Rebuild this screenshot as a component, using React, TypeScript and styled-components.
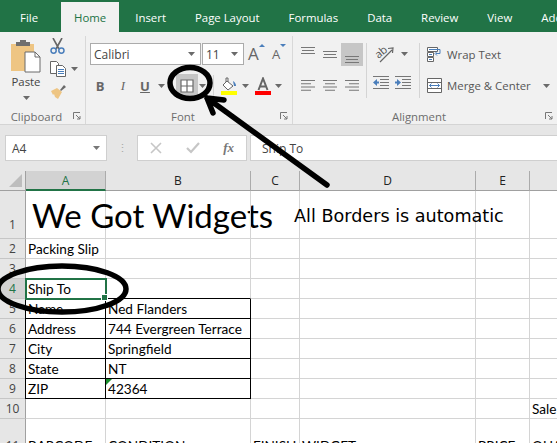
import React, { FunctionComponent } from 'react';
import styled, { createGlobalStyle } from 'styled-components';

const UI_FONT = `"Open Sans", "Noto Sans", sans-serif`;
const CELL_FONT = `Lato, "Noto Sans", sans-serif`;
const GREEN = '#217346';
const BLUE = '#4a7ebb';

const TABS = ['File', 'Home', 'Insert', 'Page Layout', 'Formulas', 'Data', 'Review', 'View', 'Add-ins'];
const COLUMNS = ['A', 'B', 'C', 'D', 'E', 'F'];

type CellData = { text?: string; boxed?: boolean; selected?: boolean; flag?: boolean };
type RowData = { label: string; height: number; cells: Record<string, CellData> };

const ROWS: RowData[] = [
  { label: '1', height: 48, cells: { A: { text: 'We Got Widgets' } } },
  { label: '2', height: 20, cells: { A: { text: 'Packing Slip' } } },
  { label: '3', height: 20, cells: {} },
  { label: '4', height: 20, cells: { A: { text: 'Ship To', selected: true } } },
  { label: '5', height: 20, cells: { A: { text: 'Name', boxed: true }, B: { text: 'Ned Flanders', boxed: true } } },
  { label: '6', height: 20, cells: { A: { text: 'Address', boxed: true }, B: { text: '744 Evergreen Terrace', boxed: true } } },
  { label: '7', height: 20, cells: { A: { text: 'City', boxed: true }, B: { text: 'Springfield', boxed: true } } },
  { label: '8', height: 20, cells: { A: { text: 'State', boxed: true }, B: { text: 'NT', boxed: true } } },
  { label: '9', height: 20, cells: { A: { text: 'ZIP', boxed: true }, B: { text: '42364', boxed: true, flag: true } } },
  { label: '10', height: 20, cells: { F: { text: 'Sale' } } },
  {
    label: '11',
    height: 37,
    cells: {
      A: { text: 'BARCODE' },
      B: { text: 'CONDITION' },
      C: { text: 'FINISH' },
      D: { text: 'WIDGET' },
      E: { text: 'PRICE' },
      F: { text: 'QUANTITY' },
    },
  },
];

const Caret: FunctionComponent<{ color?: string }> = ({ color = '#6a6a6a' }) => (
  <svg width="7" height="4" viewBox="0 0 7 4">
    <path d="M0 0h7L3.500 4z" fill={color} />
  </svg>
);

const PasteIcon = () => (
  <svg width="32" height="34" viewBox="0 0 32 34">
    <path d="M1 5h23v27H1z" fill="#eec583" />
    <path d="M6 3h4V1h6v2h4v4H6z" fill="#6f6f6f" />
    <path d="M15 13h10l5 5v15H15z" fill="#fff" stroke="#6a6a6a" />
    <path d="M25 13v5h5" fill="none" stroke="#6a6a6a" />
  </svg>
);

const ScissorsIcon = () => (
  <svg width="15" height="16" viewBox="0 0 15 16">
    <path d="M3 0l6 11M12 0L6 11" stroke="#666" strokeWidth="1.6" fill="none" />
    <circle cx="3.600" cy="12.600" r="2.600" fill="none" stroke={BLUE} strokeWidth="1.500" />
    <circle cx="11.400" cy="12.600" r="2.600" fill="none" stroke={BLUE} strokeWidth="1.500" />
  </svg>
);

const CopyIcon = () => (
  <svg width="16" height="16" viewBox="0 0 16 16">
    <path d="M.5.5h6l2 2v10h-8z" fill="#fff" stroke="#666" />
    <path d="M6.500 4.500h6l3 3v8h-9z" fill="#fff" stroke="#666" />
    <path d="M8 8.500h6M8 10.500h6M8 12.500h6" stroke={BLUE} />
  </svg>
);

const BrushIcon = () => (
  <svg width="17" height="15" viewBox="0 0 17 15">
    <path d="M10 6l4-5 2 2-5 4z" fill="#6a6a6a" />
    <path d="M1 7l6-3 5 4-4 7-3-2-1-3-1 1z" fill="#eec583" />
  </svg>
);

const BordersIcon = () => (
  <svg width="14" height="14" viewBox="0 0 14 14">
    <path d="M1 1h12v12H1zM7 1v12M1 7h12" fill="#fff" stroke="#6a6a6a" strokeWidth="1.200" />
  </svg>
);

const FillIcon = () => (
  <svg width="17" height="18" viewBox="0 0 17 18">
    <path d="M6 4l6 5-5 4-5-5z" fill="#fff" stroke="#666" />
    <path d="M5 5V1h2v4" fill="none" stroke="#666" />
    <path d="M12 4c2 1 3 3 3 5h-2z" fill={BLUE} />
    <path d="M0 14h16v4H0z" fill="#ffff00" />
  </svg>
);

const FontColorIcon = () => (
  <svg width="17" height="18" viewBox="0 0 17 18">
    <path d="M3.500 13L8 1.500 12.500 13M5 9.500h6" fill="none" stroke="#666" strokeWidth="2" />
    <path d="M0 14h16v4H0z" fill="#ff0000" />
  </svg>
);

const VerticalAlign: FunctionComponent<{ top: number }> = ({ top }) => (
  <svg width="14" height="16" viewBox="0 0 14 16">
    <path d={`M0 ${top + 0.5}h14M1 ${top + 3.5}h12M0 ${top + 6.5}h14`} stroke="#777" />
  </svg>
);

const HorizontalAlign: FunctionComponent<{ side: 'left' | 'center' | 'right' }> = ({ side }) => {
  const lines = [14, 10, 14, 10];
  const start = (w: number) => (side === 'left' ? 0 : side === 'right' ? 14 - w : (14 - w) / 2);
  return (
    <svg width="14" height="11" viewBox="0 0 14 11">
      {lines.map((w, i) => (
        <path key={i} d={`M${start(w)} ${i * 3.25 + 0.5}h${w}`} stroke="#777" />
      ))}
    </svg>
  );
};

const OrientationIcon = () => (
  <Orientation>
    <svg width="23" height="18" viewBox="0 0 23 18">
      <path d="M7 17L19 5M15 3.500l5-.5-.5 5" fill="none" stroke="#666" strokeWidth="1.200" />
    </svg>
    <OrientationText>ab</OrientationText>
  </Orientation>
);

const IndentIcon: FunctionComponent<{ flip?: boolean }> = ({ flip }) => (
  <svg width="16" height="13" viewBox="0 0 16 13">
    <path d="M0 .5h16M7 3.500h9M7 6.500h9M7 9.500h9M0 12.500h16" stroke="#777" />
    <path d={flip ? 'M0 5.500h2V3l4 3.500L2 10V7.500H0z' : 'M6 5.500H4V3L0 6.500 4 10V7.500h2z'} fill={BLUE} />
  </svg>
);

const WrapIcon = () => (
  <svg width="15" height="15" viewBox="0 0 15 15">
    <path d="M.5.5h10v4H.5zM.5 5.500h6v4h-6zM.5 10.500h6v4h-6z" fill="#fff" stroke="#666" />
    <path d="M2 2.500h11v4H9" fill="none" stroke={BLUE} />
    <path d="M10 4.500L8 6.500l2 2" fill="none" stroke={BLUE} />
    <path d="M2 7.500h3M2 12.500h3" stroke={BLUE} />
  </svg>
);

const MergeIcon = () => (
  <svg width="15" height="15" viewBox="0 0 15 15">
    <path d="M.5.5h14v14H.5zM.5 4.500h14M.5 10.500h14" fill="#fff" stroke="#666" />
    <path d="M2.500 7.500h10M4.500 5.500l-2 2 2 2M10.500 5.500l2 2-2 2" fill="none" stroke={BLUE} />
  </svg>
);

const LauncherIcon = () => (
  <svg width="8" height="8" viewBox="0 0 8 8">
    <path d="M.5 7V.5H7M3 3l4 4M7 4v3H4" fill="none" stroke="#777" />
  </svg>
);

const FunctionIcons = () => (
  <>
    <svg width="12" height="12" viewBox="0 0 12 12">
      <path d="M1 1l10 10M11 1L1 11" stroke="#c6c6c6" strokeWidth="1.600" />
    </svg>
    <svg width="14" height="12" viewBox="0 0 14 12">
      <path d="M1 6l4 4 8-9" fill="none" stroke="#c6c6c6" strokeWidth="2.200" />
    </svg>
    <FxMark>fx</FxMark>
  </>
);

const App: FunctionComponent = () => (
  <>
    <GlobalStyle />
    <Screen>
      <TabBar>
        {TABS.map((tab) => (
          <Tab key={tab} $active={tab === 'Home'} $file={tab === 'File'}>
            {tab}
          </Tab>
        ))}
      </TabBar>

      <Ribbon>
        <Group $width={86}>
          <GroupBody>
            <PasteColumn>
              <PasteIcon />
              <PasteLabel>Paste</PasteLabel>
              <Caret />
            </PasteColumn>
            <ClipboardTools>
              <ScissorsIcon />
              <ToolWithCaret>
                <CopyIcon />
                <Caret />
              </ToolWithCaret>
              <BrushIcon />
            </ClipboardTools>
          </GroupBody>
          <GroupFooter>
            <GroupLabel>Clipboard</GroupLabel>
            <LauncherIcon />
          </GroupFooter>
        </Group>

        <Group $width={207}>
          <FontBody>
            <FontRow>
              <FontSelect $width={111}>
                Calibri
                <Caret />
              </FontSelect>
              <FontSelect $width={42}>
                11
                <Caret />
              </FontSelect>
              <GrowButton>
                A
                <svg width="6" height="3" viewBox="0 0 6 3">
                  <path d="M0 3l3-3 3 3z" fill={BLUE} />
                </svg>
              </GrowButton>
              <GrowButton $small>
                A
                <svg width="6" height="3" viewBox="0 0 6 3">
                  <path d="M0 0h6L3 3z" fill={BLUE} />
                </svg>
              </GrowButton>
            </FontRow>
            <FontRow>
              <StyleButton $width={20}><b>B</b></StyleButton>
              <StyleButton $width={24}><i>I</i></StyleButton>
              <StyleButton $width={20}><u>U</u></StyleButton>
              <StyleCaret>
                <Caret />
              </StyleCaret>
              <BorderButton>
                <BordersIcon />
              </BorderButton>
              <Caret />
              <VerticalRule $space={7} />
              <FillIcon />
              <SmallGap $width={4} />
              <Caret />
              <SmallGap $width={6} />
              <FontColorIcon />
              <SmallGap $width={3} />
              <Caret />
            </FontRow>
          </FontBody>
          <GroupFooter>
            <GroupLabel>Font</GroupLabel>
            <LauncherIcon />
          </GroupFooter>
        </Group>

        <Group $width={264} $last>
          <AlignBody>
            <AlignGrid>
              <AlignCell>
                <VerticalAlign top={0} />
              </AlignCell>
              <AlignCell>
                <VerticalAlign top={4} />
              </AlignCell>
              <AlignCell $active>
                <VerticalAlign top={9} />
              </AlignCell>
              <AlignCell>
                <HorizontalAlign side="left" />
              </AlignCell>
              <AlignCell>
                <HorizontalAlign side="center" />
              </AlignCell>
              <AlignCell>
                <HorizontalAlign side="right" />
              </AlignCell>
            </AlignGrid>
            <VerticalRule $space={3} $tall />
            <IndentColumn>
              <ToolWithCaret>
                <OrientationIcon />
                <Caret />
              </ToolWithCaret>
              <IndentRow>
                <IndentIcon />
                <IndentIcon flip />
              </IndentRow>
            </IndentColumn>
            <VerticalRule $space={6} $tall />
            <WrapColumn>
              <WrapRow>
                <WrapIcon />
                Wrap Text
              </WrapRow>
              <WrapRow>
                <MergeIcon />
                Merge &amp; Center
                <MergeCaret>
                  <Caret />
                </MergeCaret>
              </WrapRow>
            </WrapColumn>
          </AlignBody>
          <GroupFooter>
            <GroupLabel>Alignment</GroupLabel>
            <LauncherIcon />
          </GroupFooter>
        </Group>
      </Ribbon>

      <FormulaBar>
        <NameBox>
          A4
          <Caret color="#777" />
        </NameBox>
        <Grip>⋮</Grip>
        <FunctionBox>
          <FunctionIcons />
        </FunctionBox>
        <FormulaInput>Ship To</FormulaInput>
      </FormulaBar>

      <Sheet>
        <Corner>
          <svg width="13" height="13" viewBox="0 0 13 13">
            <path d="M13 0v13H0z" fill="#bdbdbd" />
          </svg>
        </Corner>
        {COLUMNS.map((col) => (
          <ColumnHeader key={col} $active={col === 'A'}>
            {col}
          </ColumnHeader>
        ))}
        {ROWS.map((row) => (
          <React.Fragment key={row.label}>
            <RowHeader $height={row.height} $active={row.label === '4'}>
              {row.label}
            </RowHeader>
            {COLUMNS.map((col) => {
              const cell = row.cells[col] ?? {};
              return (
                <Cell
                  key={col}
                  $boxed={cell.boxed}
                  $selected={cell.selected}
                  $title={row.label === '1'}
                  $bottomBlack={row.label === '4' && col === 'B'}
                >
                  {cell.text}
                  {cell.flag && <ErrorFlag />}
                  {cell.selected && <FillHandle />}
                </Cell>
              );
            })}
          </React.Fragment>
        ))}
      </Sheet>

      <Note>All Borders is automatic</Note>

      <Markup viewBox="0 0 557 443" width="557" height="443">
        <ellipse cx="190" cy="83" rx="20" ry="15.500" />
        <path d="M327 185L207 98M224 100L207 98L213 113" />
        <ellipse cx="62" cy="289" rx="64" ry="23" />
      </Markup>
    </Screen>
  </>
);

const GlobalStyle = createGlobalStyle`
  html, body {
    margin: 0;
    padding: 0;
    background: #fff;
  }
`;

const Screen = styled.div`
  position: relative;
  display: flex;
  flex-direction: column;
  width: 557px;
  height: 443px;
  overflow: hidden;
  font-family: ${UI_FONT};
  font-size: 11.4px;
  color: #444;
`;

const TabBar = styled.div`
  display: flex;
  flex: none;
  align-items: flex-end;
  gap: 3px;
  height: 32px;
  padding-left: 7px;
  background: ${GREEN};
  white-space: nowrap;
`;

const Tab = styled.div<{ $active?: boolean; $file?: boolean }>`
  display: flex;
  align-items: center;
  justify-content: center;
  height: 30px;
  padding: 0 13px;
  margin-right: ${(p) => (p.$file ? '7px' : 0)};
  background: ${(p) => (p.$active ? '#f1f1f1' : 'transparent')};
  color: ${(p) => (p.$active ? GREEN : '#fff')};
`;

const Ribbon = styled.div`
  display: flex;
  flex: none;
  height: 93px;
  box-sizing: border-box;
  padding-top: 4px;
  background: #f1f1f1;
  border-bottom: 1px solid #d4d4d4;
`;

const Group = styled.div<{ $width: number; $last?: boolean }>`
  display: flex;
  flex: none;
  flex-direction: column;
  box-sizing: border-box;
  width: ${(p) => p.$width}px;
  height: 88px;
  border-right: ${(p) => (p.$last ? 'none' : '1px solid #d8d8d8')};
`;

const GroupBody = styled.div`
  display: flex;
  flex: 1;
  padding-left: 10px;
`;

const GroupFooter = styled.div`
  display: flex;
  flex: none;
  align-items: center;
  height: 16px;
  padding-right: 4px;
`;

const GroupLabel = styled.div`
  flex: 1;
  text-align: center;
  color: #6d6d6d;
`;

const PasteColumn = styled.div`
  display: flex;
  flex-direction: column;
  align-items: center;
  width: 32px;
  padding-top: 3px;
`;

const PasteLabel = styled.div`
  margin: 0 0 6px;
  line-height: 17px;
  color: #444;
`;

const ClipboardTools = styled.div`
  display: flex;
  flex-direction: column;
  gap: 7px;
  padding: 2px 0 0 8px;
`;

const ToolWithCaret = styled.div`
  display: flex;
  align-items: center;
  gap: 5px;
`;

const FontBody = styled.div`
  display: flex;
  flex: 1;
  flex-direction: column;
  gap: 10px;
  padding: 7px 0 0 4px;
`;

const FontRow = styled.div`
  display: flex;
  align-items: center;
  height: 22px;
`;

const FontSelect = styled.div<{ $width: number }>`
  display: flex;
  align-items: center;
  justify-content: space-between;
  box-sizing: border-box;
  width: ${(p) => p.$width}px;
  height: 22px;
  margin-right: 1px;
  padding: 0 5px 0 3px;
  background: #fff;
  border: 1px solid #ababab;
  color: #444;
  font-size: 12px;
`;

const GrowButton = styled.div<{ $small?: boolean }>`
  display: flex;
  align-items: flex-start;
  flex: none;
  width: 20px;
  margin-left: ${(p) => (p.$small ? '4px' : '3px')};
  font-size: ${(p) => (p.$small ? '13px' : '17px')};
  line-height: 20px;
  color: #666;
`;

const StyleButton = styled.div<{ $width: number }>`
  width: ${(p) => p.$width}px;
  margin-left: ${(p) => (p.$width === 20 ? '0' : '1px')};
  text-align: center;
  font-size: 13px;
  font-family: "Liberation Serif", serif;
  color: #666;

  & b,
  & u {
    font-family: ${UI_FONT};
    font-weight: 700;
  }
`;

const StyleCaret = styled.span`
  display: flex;
  margin-left: 3px;
`;

const BorderButton = styled.div`
  display: flex;
  align-items: center;
  justify-content: center;
  width: 22px;
  height: 24px;
  margin: 0 1px 0 11px;
  background: #c6c6c6;
`;

const VerticalRule = styled.div<{ $space: number; $tall?: boolean }>`
  flex: none;
  width: 1px;
  height: ${(p) => (p.$tall ? '55px' : '22px')};
  margin: 0 ${(p) => p.$space}px;
  background: #d4d4d4;
`;

const SmallGap = styled.div<{ $width: number }>`
  flex: none;
  width: ${(p) => p.$width}px;
`;

const AlignBody = styled.div`
  display: flex;
  flex: 1;
  align-items: flex-start;
  padding-top: 7px;
`;

const AlignGrid = styled.div`
  display: grid;
  grid-template-columns: repeat(3, 22px);
  grid-auto-rows: 23px;
  row-gap: 8px;
  margin-left: 4px;
`;

const AlignCell = styled.div<{ $active?: boolean }>`
  display: flex;
  align-items: center;
  justify-content: center;
  background: ${(p) => (p.$active ? '#c6c6c6' : 'transparent')};
`;

const IndentColumn = styled.div`
  display: flex;
  flex-direction: column;
  gap: 13px;
  box-sizing: border-box;
  width: 43px;
  padding: 2px 0 0 3px;
`;

const Orientation = styled.div`
  position: relative;
  display: flex;
`;

const OrientationText = styled.span`
  position: absolute;
  top: 0;
  left: 1px;
  font-size: 11px;
  line-height: 13px;
  color: #555;
  transform: rotate(-40deg);
`;

const IndentRow = styled.div`
  display: flex;
  gap: 6px;
`;

const WrapColumn = styled.div`
  display: flex;
  flex-direction: column;
  gap: 8px;
  margin-left: 1px;
`;

const WrapRow = styled.div`
  display: flex;
  align-items: center;
  gap: 5px;
  height: 23px;
  white-space: nowrap;
  color: #555;
`;

const MergeCaret = styled.span`
  display: flex;
  margin-left: 7px;
`;

const FormulaBar = styled.div`
  display: flex;
  flex: none;
  align-items: flex-start;
  height: 46px;
  box-sizing: border-box;
  padding-top: 10px;
  background: #e6e6e6;
`;

const NameBox = styled.div`
  display: flex;
  align-items: center;
  justify-content: space-between;
  box-sizing: border-box;
  width: 102px;
  height: 26px;
  margin-left: 5px;
  padding: 0 6px;
  background: #fff;
  border: 1px solid #cfcfcf;
  color: #444;
  font-size: 12px;
`;

const Grip = styled.div`
  width: 30px;
  line-height: 26px;
  text-align: center;
  color: #a8a8a8;
`;

const FunctionBox = styled.div`
  display: flex;
  align-items: center;
  justify-content: space-between;
  box-sizing: border-box;
  width: 110px;
  height: 26px;
  padding: 0 12px;
  background: #fff;
  border: 1px solid #cfcfcf;
`;

const FxMark = styled.span`
  font-family: "Liberation Serif", serif;
  font-style: italic;
  font-weight: 700;
  font-size: 13px;
  color: #777;
`;

const FormulaInput = styled.div`
  display: flex;
  flex: 1;
  align-items: center;
  box-sizing: border-box;
  height: 26px;
  margin-left: 3px;
  padding-left: 11px;
  background: #fff;
  border: 1px solid #cfcfcf;
  border-right: none;
  color: #444;
  font-size: 12px;
`;

const Sheet = styled.div`
  display: grid;
  flex: none;
  grid-template-columns: 26px 80px 145px 49px 176px 54px 100px;
  grid-auto-rows: min-content;
  width: 630px;
  background: #fff;
  font-family: ${CELL_FONT};
  font-size: 13.6px;
  color: #000;
`;

const Corner = styled.div`
  display: flex;
  align-items: flex-end;
  justify-content: flex-end;
  box-sizing: border-box;
  height: 20px;
  padding: 0 3px 3px 0;
  background: #e6e6e6;
  border-bottom: 1px solid #a0a0a0;
  border-right: 1px solid #a0a0a0;
`;

const ColumnHeader = styled.div<{ $active?: boolean }>`
  box-sizing: border-box;
  height: 20px;
  line-height: 19px;
  text-align: center;
  font-family: ${UI_FONT};
  font-size: 12px;
  background: ${(p) => (p.$active ? '#d2d2d2' : '#e6e6e6')};
  color: ${(p) => (p.$active ? GREEN : '#222')};
  border-right: 1px solid #ababab;
  border-bottom: ${(p) => (p.$active ? `2px solid ${GREEN}` : '1px solid #a0a0a0')};
`;

const RowHeader = styled.div<{ $height: number; $active?: boolean }>`
  display: flex;
  align-items: flex-end;
  justify-content: center;
  box-sizing: border-box;
  height: ${(p) => p.$height}px;
  padding-bottom: ${(p) => (p.$height === 48 ? '5px' : '1px')};
  line-height: 17px;
  font-family: ${UI_FONT};
  font-size: 12px;
  background: ${(p) => (p.$active ? '#d2d2d2' : '#e6e6e6')};
  color: ${(p) => (p.$active ? GREEN : '#444')};
  border-right: 1px solid #a0a0a0;
  border-bottom: 1px solid #c6c6c6;
`;

const Cell = styled.div<{ $boxed?: boolean; $selected?: boolean; $title?: boolean; $bottomBlack?: boolean }>`
  position: relative;
  display: flex;
  align-items: ${(p) => (p.$title ? 'center' : 'flex-end')};
  box-sizing: border-box;
  min-width: 0;
  padding-left: ${(p) => (p.$title ? '6px' : '2px')};
  white-space: nowrap;
  line-height: ${(p) => (p.$title ? '40px' : '18px')};
  font-size: ${(p) => (p.$title ? '33px' : '13.6px')};
  border-right: 1px solid ${(p) => (p.$boxed ? '#000' : '#d4d4d4')};
  border-bottom: 1px solid ${(p) => (p.$boxed || p.$bottomBlack ? '#000' : '#d4d4d4')};
  box-shadow: ${(p) => (p.$boxed ? '-1px 0 0 #000' : 'none')};
  outline: ${(p) => (p.$selected ? `2px solid ${GREEN}` : 'none')};
  outline-offset: -1px;
  z-index: ${(p) => (p.$selected ? 2 : p.$boxed ? 1 : 'auto')};
`;

const FillHandle = styled.span`
  position: absolute;
  right: -3px;
  bottom: -3px;
  width: 5px;
  height: 5px;
  background: ${GREEN};
  border: 1px solid #fff;
`;

const ErrorFlag = styled.span`
  position: absolute;
  top: 0;
  left: 0;
  width: 0;
  height: 0;
  border-top: 6px solid #1a8f2c;
  border-right: 6px solid transparent;
`;

const Note = styled.div`
  position: absolute;
  top: 205px;
  left: 294px;
  font-family: "DejaVu Sans", sans-serif;
  font-size: 17.6px;
  line-height: 22px;
  white-space: nowrap;
  color: #000;
`;

const Markup = styled.svg`
  position: absolute;
  top: 0;
  left: 0;
  fill: none;
  stroke: #000;
  stroke-width: 5.5;
  stroke-linecap: round;
  stroke-linejoin: round;
`;

export default App;
